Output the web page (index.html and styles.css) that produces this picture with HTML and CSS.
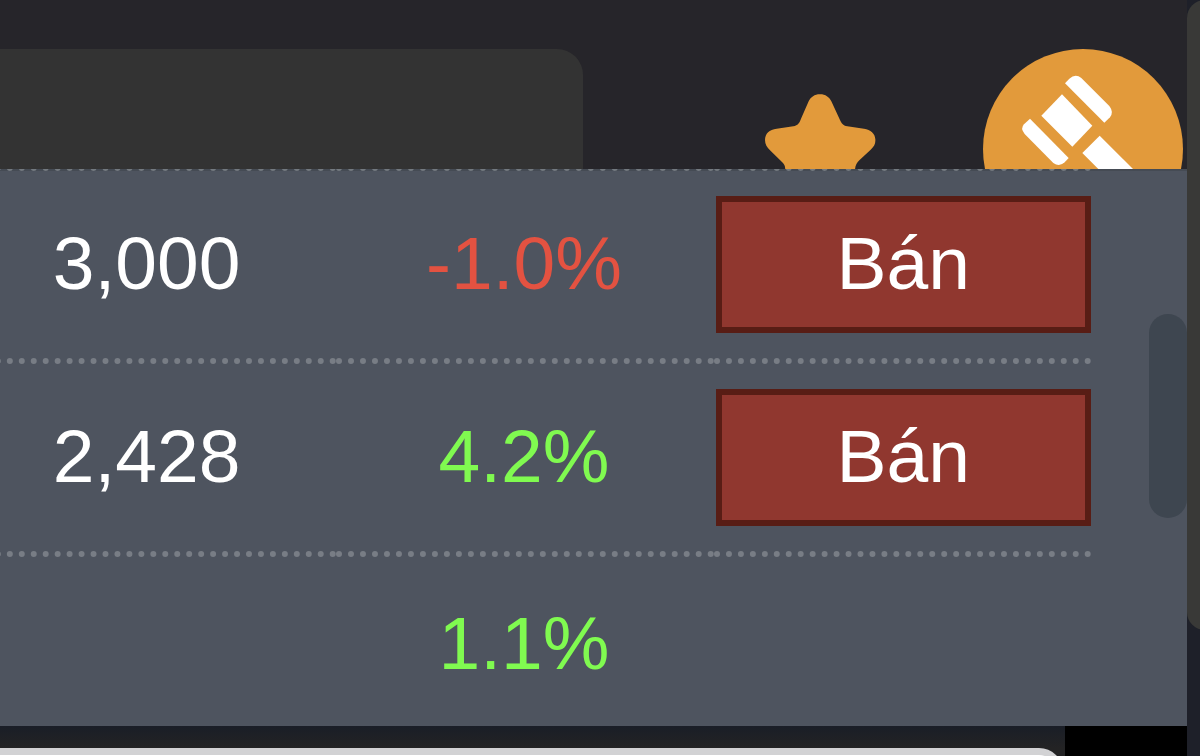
FILE: index.html
```html
<!DOCTYPE html>
<html lang="vi">
<head>
<meta charset="utf-8">
<title>Bán</title>
<link rel="stylesheet" href="styles.css">
</head>
<body>
<main class="main">
  <header class="header">
    <div class="card"></div>
    <div class="actions">
      <button class="icon-button" type="button" aria-label="Star">
        <svg class="star" viewBox="75 190 333 330" aria-hidden="true">
          <path fill="#e29a3b" d="M240 191C223 191 213 199 206 212L184 262C178 278 174 284 160 287L110 294C88 297 75 308 75 328C75 341 81 350 90 359L126 394C134 402 137 408 135 420L126 470C122 500 140 515 165 503L220 475Q240 466 260 475L316 503C342 515 358 500 354 470L345 420C345 405 350 397 358 389L392 357C402 347 407 340 406 326C405 308 392 297 372 294L322 287C308 284 305 278 300 268L274 212C267 199 257 191 240 191Z"/>
        </svg>
      </button>
      <button class="icon-button" type="button" aria-label="Gavel">
        <svg class="gavel" viewBox="-51 -33 600 600" aria-hidden="true">
          <circle cx="249" cy="267" r="300" fill="#e29a3b"/>
          <g fill="#fff">
            <path d="M195 70L208 56Q226 40 244 54L328 138Q342 156 330 172L313 188Z"/>
            <path d="M186 103L277 197L217 260L124 167Z"/>
            <path d="M90 176L206 294L194 307Q178 322 160 309L74 222Q60 205 72 193Z"/>
            <path d="M299 227L247 279L420 452L472 400Z"/>
          </g>
        </svg>
      </button>
    </div>
  </header>
  <div class="edge">
    <div class="edge-row"><span class="edge-cell"></span><span class="edge-cell"></span><span class="edge-cell"></span></div>
  </div>
  <section class="panel">
    <table class="prices">
      <tbody>
        <tr><td>3,000</td><td class="down">-1.0%</td><td class="action"><button class="sell" type="button">Bán</button></td></tr>
        <tr><td>2,428</td><td class="up">4.2%</td><td class="action"><button class="sell" type="button">Bán</button></td></tr>
        <tr class="last"><td></td><td class="up">1.1%</td><td></td></tr>
      </tbody>
    </table>
    <div class="thumb"></div>
  </section>
  <footer class="footer">
    <div class="footer-left"><div class="sheet"></div></div>
    <div class="footer-right"></div>
  </footer>
</main>
<aside class="side"><div class="side-card"></div></aside>
</body>
</html>
```

FILE: styles.css
```css
* {
  box-sizing: border-box;
}

body {
  display: flex;
  height: 100vh;
  margin: 0;
  overflow: hidden;
  background: #26252a;
  color: #fff;
  font-family: "Liberation Sans", Arial, sans-serif;
  font-size: 75px;
  line-height: 86px;
}

.main {
  display: flex;
  flex: 1;
  flex-direction: column;
  min-width: 0;
}

.header {
  display: flex;
  justify-content: space-between;
  height: 169px;
  padding: 49px 4px 0 0;
  overflow: hidden;
}

.card {
  width: 49.3%;
  height: 120px;
  border-top-right-radius: 26px;
  background: #333;
}

.actions {
  display: flex;
  align-items: flex-start;
  gap: 107px;
}

.icon-button {
  padding: 0;
  border: 0;
  background: none;
}

.icon-button svg {
  display: block;
}

.star {
  width: 111px;
  height: 110px;
  margin-top: 45px;
}

.gavel {
  width: 200px;
  height: 200px;
}

.edge {
  height: 2px;
  overflow: hidden;
  background: #454b54;
}

.edge-row {
  display: flex;
  height: 100%;
  align-items: flex-end;
  margin: 0 96px 0 -41px;
}

.edge-cell {
  flex: 1;
  border-bottom: 6px dotted #747a80;
}

.panel {
  position: relative;
  height: 555px;
  flex: none;
  padding: 0 96px 0 0;
  overflow: hidden;
  background: #4e545f;
}

.prices {
  width: calc(100% + 41px);
  margin-left: -41px;
  border-spacing: 0;
  table-layout: fixed;
}

.prices td {
  height: 193px;
  padding: 0 2px 3px 0;
  border-bottom: 6px dotted #787d85;
  text-align: center;
}

.prices .action {
  padding: 0 0 0 2px;
}

.prices .last td {
  height: 175px;
  border-bottom: 0;
}

.down {
  color: #e35241;
}

.up {
  color: #80fa50;
}

.sell {
  display: block;
  width: 100%;
  height: 137px;
  padding: 0 0 3px;
  border: 6px solid #581d15;
  background: #90372f;
  color: #fff;
  font: inherit;
}

.thumb {
  position: absolute;
  top: 143px;
  right: 0;
  width: 38px;
  height: 204px;
  border-radius: 19px;
  background: #3e4650;
}

.footer {
  display: flex;
  flex: 1;
  min-height: 0;
  overflow: hidden;
}

.footer-left {
  flex: 1;
  padding: 22px 2px 0 0;
  background: linear-gradient(#1a1e27, #232324 22px);
}

.sheet {
  height: 60px;
  border-top: 7px solid #d2d2d4;
  border-right: 7px solid #d2d2d4;
  border-top-right-radius: 24px;
  background: #fff;
}

.footer-right {
  width: 122px;
  background: #000;
}

.side {
  width: 13px;
  overflow: hidden;
  background: #1e2029;
}

.side-card {
  width: 40px;
  height: 630px;
  border-radius: 18px;
  background: #393937;
}
```
